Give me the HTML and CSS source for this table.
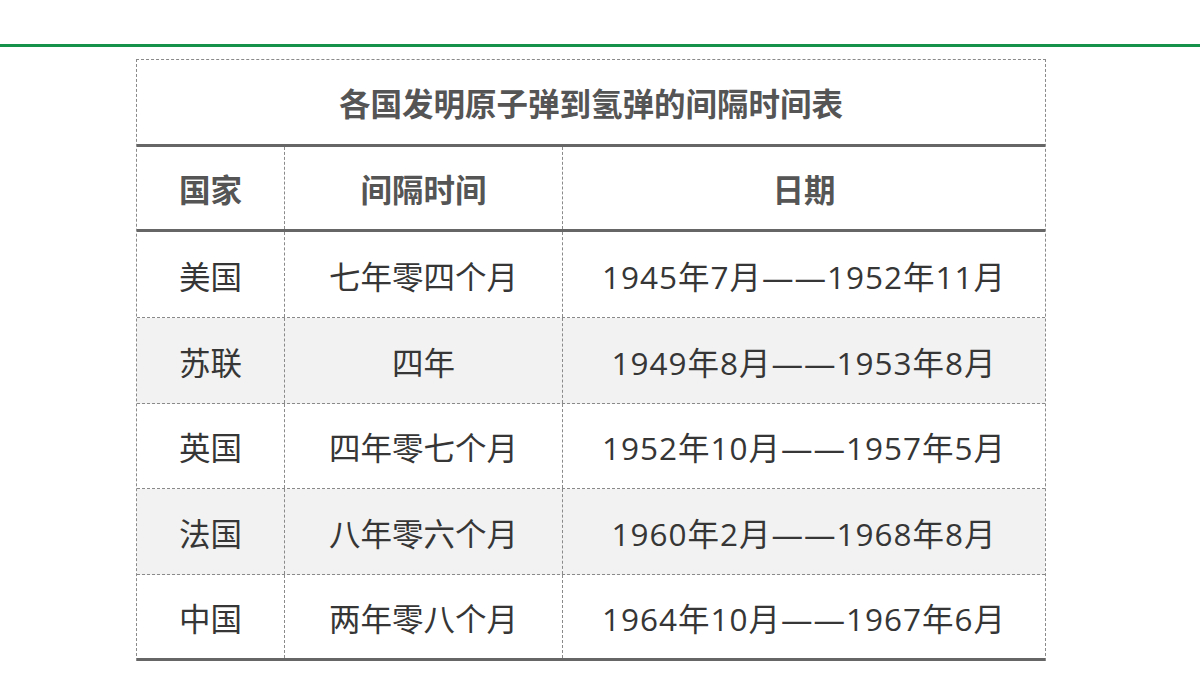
FILE: index.html
```html
<!DOCTYPE html>
<html lang="zh-CN">
<head>
<meta charset="utf-8">
<title>各国发明原子弹到氢弹的间隔时间表</title>
<link rel="stylesheet" href="styles.css">
</head>
<body>
<div class="topbar"></div>
<div class="table">
  <div class="title">各国发明原子弹到氢弹的间隔时间表</div>
  <div class="row head">
    <div class="cell">国家</div>
    <div class="cell">间隔时间</div>
    <div class="cell">日期</div>
  </div>
  <div class="row r1">
    <div class="cell">美国</div>
    <div class="cell">七年零四个月</div>
    <div class="cell date">1945年7月——1952年11月</div>
  </div>
  <div class="row r2 stripe">
    <div class="cell">苏联</div>
    <div class="cell">四年</div>
    <div class="cell date">1949年8月——1953年8月</div>
  </div>
  <div class="row r3">
    <div class="cell">英国</div>
    <div class="cell">四年零七个月</div>
    <div class="cell date">1952年10月——1957年5月</div>
  </div>
  <div class="row r4 stripe">
    <div class="cell">法国</div>
    <div class="cell">八年零六个月</div>
    <div class="cell date">1960年2月——1968年8月</div>
  </div>
  <div class="row r5 last">
    <div class="cell">中国</div>
    <div class="cell">两年零八个月</div>
    <div class="cell date">1964年10月——1967年6月</div>
  </div>
</div>
</body>
</html>
```

FILE: styles.css
```css
html, body {
  margin: 0;
  padding: 0;
  background: #ffffff;
}
body {
  font-family: "Open Sans", "Noto Sans CJK SC", sans-serif;
  color: #363636;
}
.topbar {
  margin-top: 44px;
  height: 3px;
  background: #17924b;
}
.table {
  margin: 12px 0 0 136px;
  width: 910px;
  border-left: 1px dashed #8a8a8a;
  border-right: 1px dashed #8a8a8a;
  border-top: 1px dashed #8a8a8a;
  box-sizing: border-box;
}
.title {
  height: 84px;
  display: flex;
  align-items: center;
  justify-content: center;
  font-weight: bold;
  font-size: 31.5px;
  color: #555555;
  border-bottom: 3px solid #666666;
}
.row {
  display: grid;
  grid-template-columns: 147px 278px 1fr;
  border-bottom: 1px dashed #8a8a8a;
}
.cell {
  display: flex;
  align-items: center;
  justify-content: center;
  font-size: 31.5px;
  white-space: nowrap;
}
.cell + .cell {
  border-left: 1px dashed #8a8a8a;
}
.date {
  letter-spacing: 1px;
}
.head {
  height: 82px;
  border-bottom: 3px solid #666666;
}
.head .cell {
  font-weight: bold;
  color: #555555;
}
.r1 { height: 85px; }
.r2 { height: 85px; }
.r3 { height: 84px; }
.r4 { height: 85px; }
.r5 { height: 83px; }
.stripe {
  background: #f2f2f2;
}
.last {
  border-bottom: 3px solid #666666;
}
```
